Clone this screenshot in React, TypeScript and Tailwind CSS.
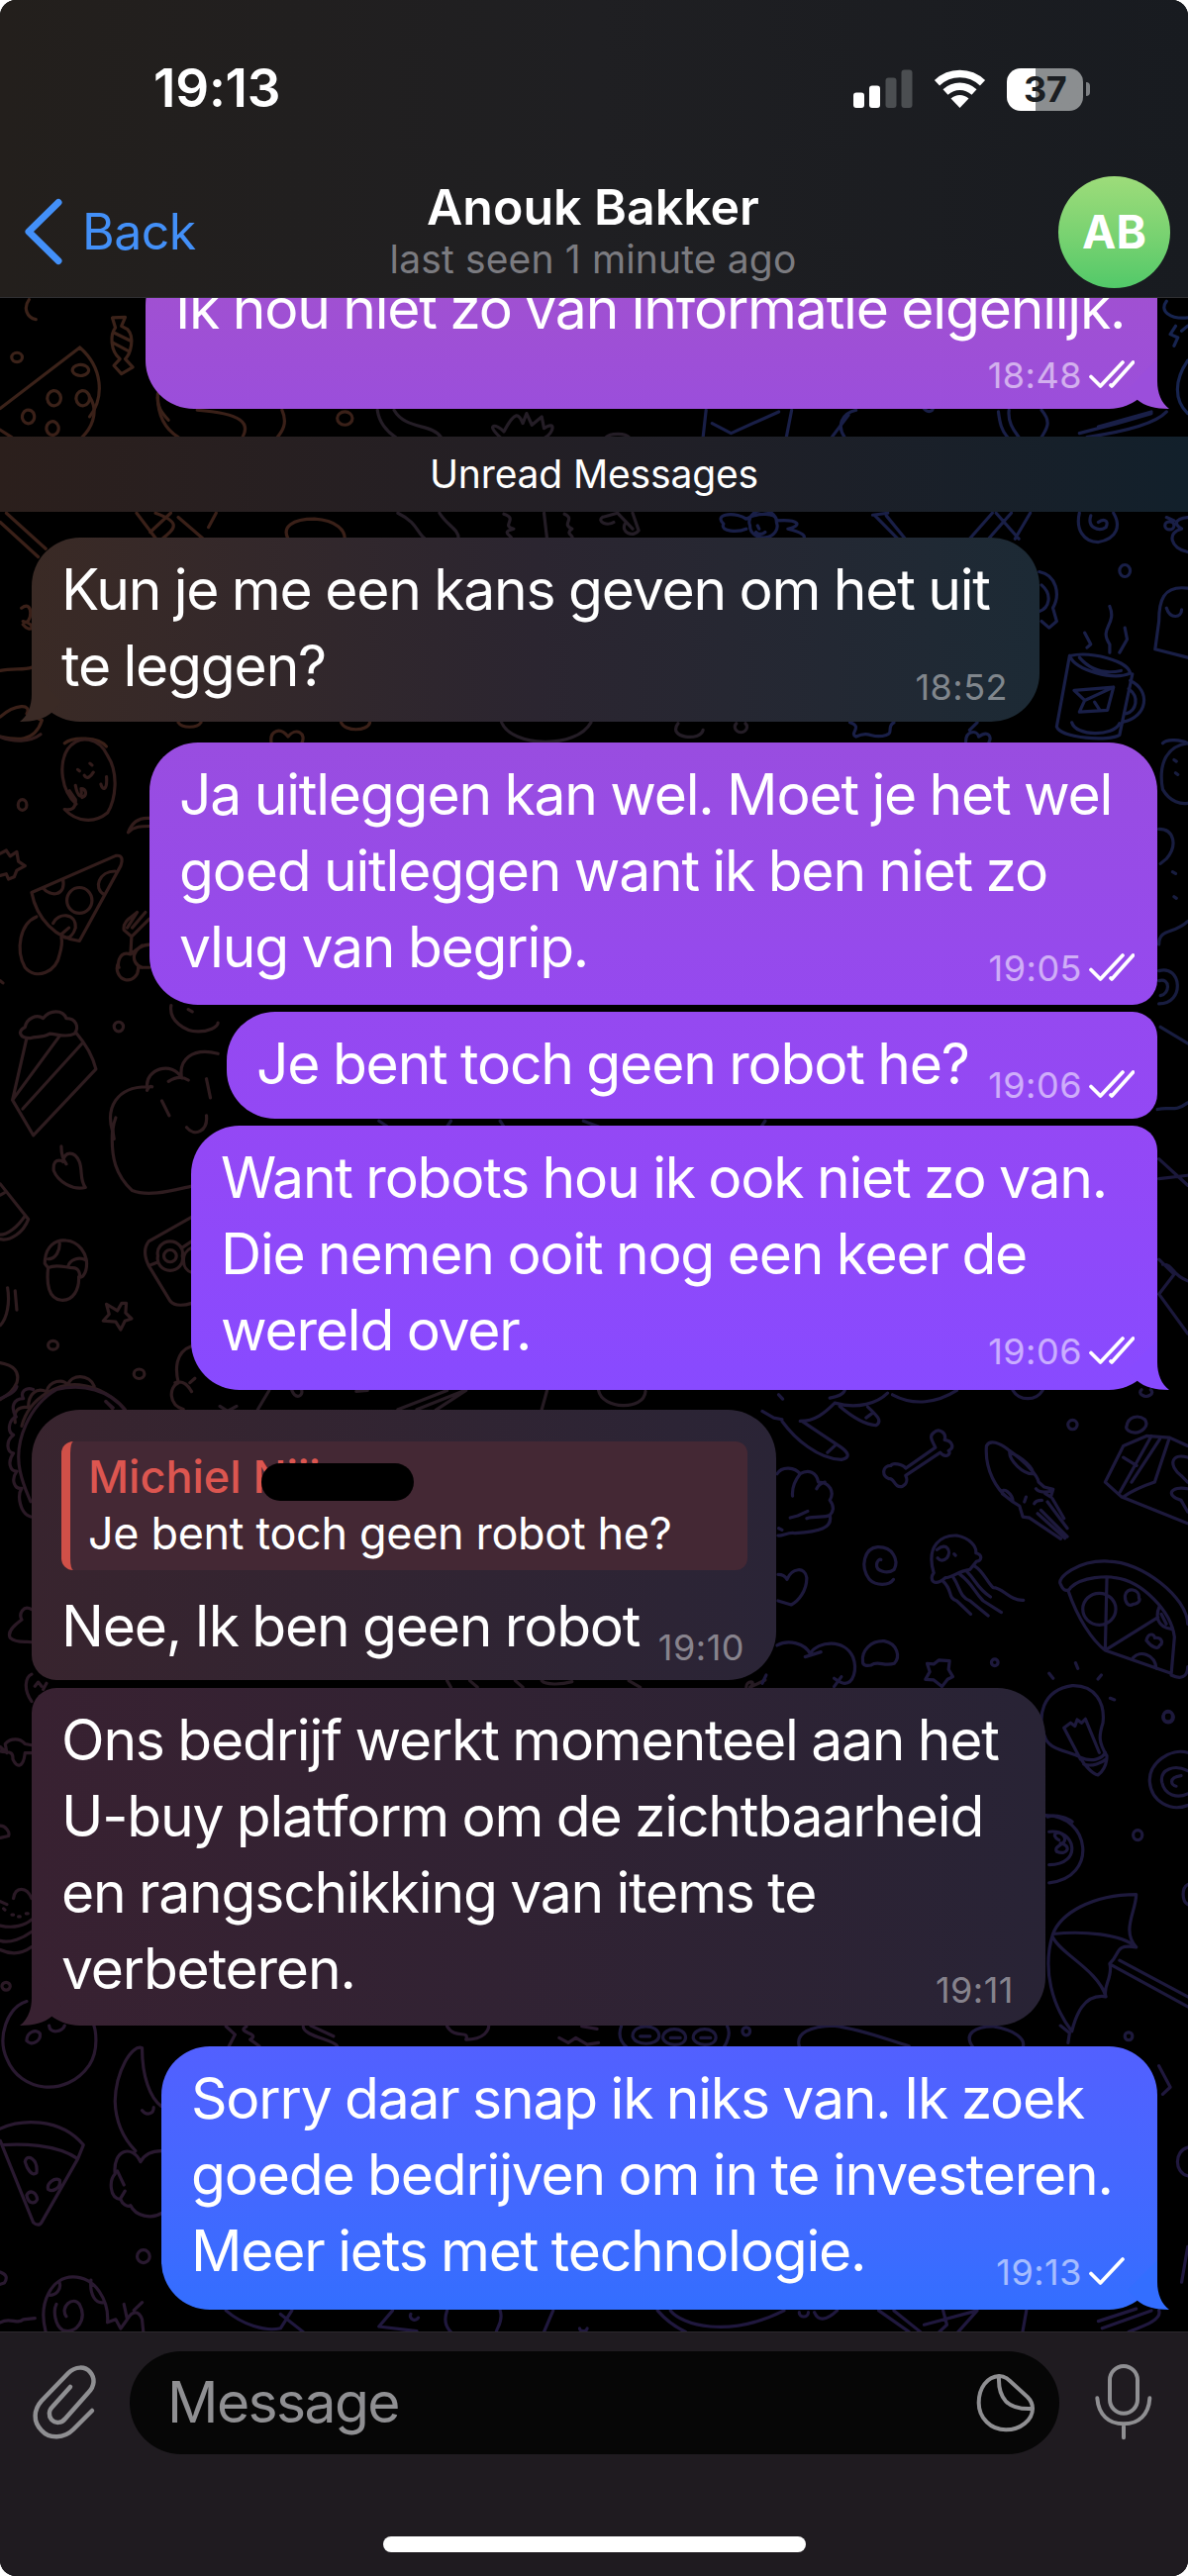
import React from 'react';
import clsx from 'clsx';

type Message = {
  id: number;
  lines: string[];
  time: string;
  outgoing?: boolean;
  status?: 'sent' | 'read';
  tail?: boolean;
  reply?: { author: string; text: string };
  className: string;
};

const messages: Message[] = [
  {
    id: 2,
    lines: ['Kun je me een kans geven om het uit', 'te leggen?'],
    time: '18:52',
    tail: true,
    className: 'mt-[26px] w-[1018px] h-[186px] rounded-[49px] bg-linear-to-r from-[#3a2a25] via-[#2b2530] to-[#1c2a35] text-[#3a2a25]',
  },
  {
    id: 3,
    lines: ['Ja uitleggen kan wel. Moet je het wel', 'goed uitleggen want ik ben niet zo', 'vlug van begrip.'],
    time: '19:05',
    outgoing: true,
    status: 'read',
    className: 'mt-[21px] w-[1018px] h-[265px] rounded-[49px] rounded-br-[25px] bg-linear-to-b from-[#994de0] to-[#9549ef]',
  },
  {
    id: 4,
    lines: ['Je bent toch geen robot he?'],
    time: '19:06',
    outgoing: true,
    status: 'read',
    className: 'mt-[7px] w-[940px] h-[108px] rounded-[49px] rounded-r-[25px] bg-linear-to-b from-[#9549f0] to-[#9348f5]',
  },
  {
    id: 5,
    lines: ['Want robots hou ik ook niet zo van.', 'Die nemen ooit nog een keer de', 'wereld over.'],
    time: '19:06',
    outgoing: true,
    status: 'read',
    tail: true,
    className: 'mt-[7px] w-[976px] h-[267px] rounded-[49px] rounded-tr-[25px] bg-linear-to-b from-[#9448f5] to-[#884aff] text-[#884aff]',
  },
  {
    id: 6,
    lines: ['Nee, Ik ben geen robot'],
    time: '19:10',
    reply: { author: 'Michiel Niii', text: 'Je bent toch geen robot he?' },
    className: 'mt-[20px] w-[752px] h-[273px] rounded-[49px] rounded-bl-[25px] bg-linear-to-r from-[#38242e] to-[#2a2436]',
  },
  {
    id: 7,
    lines: ['Ons bedrijf werkt momenteel aan het', 'U-buy platform om de zichtbaarheid', 'en rangschikking van items te', 'verbeteren.'],
    time: '19:11',
    tail: true,
    className: 'mt-[8px] w-[1024px] h-[341px] rounded-[49px] rounded-tl-[25px] bg-linear-to-r from-[#382131] to-[#282335] text-[#382131]',
  },
  {
    id: 8,
    lines: ['Sorry daar snap ik niks van. Ik zoek', 'goede bedrijven om in te investeren.', 'Meer iets met technologie.'],
    time: '19:13',
    outgoing: true,
    status: 'sent',
    tail: true,
    className: 'mt-[21px] w-[1006px] h-[266px] rounded-[49px] bg-linear-to-b from-[#5260ff] to-[#336eff] text-[#336eff]',
  },
];

// Every group has its own drawing space; strokes stay at the same width
const doodles: { transform: string; stroke: string; paths: string[] }[] = [
  {
    transform: 'scale(.7653 .3333)',
    stroke: '#4a2b20',
    paths: [
      'M38 905C30 930 35 960 47 965',
      'M148 960L165 958L160 985L168 995C178 1020 172 1070 165 1085L175 1110L160 1130L150 1105L158 1085C145 1060 145 1010 152 990Z M150 1005L172 1030M148 1035L170 1062',
      'M105 1050L0 1235M105 1050C135 1110 138 1200 118 1260M97 1110a9 14 0 1 0 18 18a9 14 0 1 0-18-18M64 1190a7 18 0 1 0 14 28a7 18 0 1 0-14-28M102 1190a7 18 0 1 0 14 28a7 18 0 1 0-14-28M15 1080a7 14 0 1 0 14 0a7 14 0 1 0-14 0',
      'M208 1190C206 1230 214 1250 222 1270',
    ],
  },
  {
    transform: 'scale(.7653 .3333)',
    stroke: '#1d2d63',
    paths: ['M1540 910C1530 940 1545 965 1568 960M1552 985L1545 1010L1555 1020L1550 1045M1560 1000L1568 985M1568 1090C1550 1150 1550 1210 1568 1250'],
  },
  {
    transform: 'translate(0 400) scale(.7653 .3333)',
    stroke: '#49291f',
    paths: [
      'M0 100L15 122M118 0C132 50 118 100 108 122M30 50a7 18 0 1 0 14 20a7 18 0 1 0-14-20M62 85a7 18 0 1 0 14 20a7 18 0 1 0-14-20',
      'M208 0C208 60 220 100 235 122M260 40C320 50 330 80 320 122M372 40C380 80 372 105 366 122M445 65a10 20 0 1 0 20 0a10 20 0 1 0-20 0',
      'M0 380L50 485M8 352L60 460M180 352L205 428M225 352L198 410M205 352C240 380 230 400 215 428M235 365L268 430M285 352L275 395',
      'M380 430C372 395 385 370 415 370C445 375 455 405 455 430M0 830C15 820 30 830 42 820M28 640C45 610 42 700 30 680C50 690 40 720 30 690',
      'M0 970C20 930 42 930 35 960L55 980C45 1050 20 1040 0 1030M85 1050C95 1030 130 1030 140 1060M358 1050C355 1010 370 1000 380 1030C390 1000 405 1020 398 1050M235 987C240 1005 260 1005 265 987M450 987C455 1015 485 1015 488 987',
    ],
  },
  {
    transform: 'translate(0 400) scale(.7653 .3333)',
    stroke: '#2e2530',
    paths: [
      'M498 40C500 75 510 105 522 122M520 40C535 100 570 80 582 122M660 122C640 80 655 80 665 105C680 40 685 50 690 80L695 50L702 85L715 60L718 95C735 70 730 110 720 122M800 122C805 110 825 108 830 122',
      'M525 352C550 380 550 410 560 428M580 352C590 390 605 400 605 428M665 355C685 370 660 390 678 400C660 410 675 420 675 428M718 352L722 430M745 355C760 370 740 385 755 400C745 415 758 420 755 428',
      'M795 365L815 352L835 400M795 365a8 10 0 1 0 15 15M825 385a8 16 0 1 0 18 20L835 352M662 987C675 1060 760 1070 780 987M895 990C880 1035 925 1045 928 1010M972 990a8 16 0 1 0 12 0',
    ],
  },
  {
    transform: 'translate(0 400) scale(.7653 .3333)',
    stroke: '#202759',
    paths: [
      'M932 40L928 122M940 80L965 110L1028 45M1045 40L1038 122M1120 55L1098 122M1130 40C1110 50 1105 90 1115 122M1218 30C1225 55 1235 40 1230 30M1318 45C1320 80 1322 100 1330 122M1332 40C1330 80 1340 105 1345 122M1375 40C1390 80 1380 100 1375 122M1425 110L1475 80L1520 50M1435 122C1500 100 1530 70 1540 45M1450 90L1520 45',
      'M955 385C940 350 975 350 985 370C1000 350 1025 350 1025 375C1055 370 1060 390 1040 400C1060 410 1065 425 1060 430M990 390a18 35 0 1 0 35-10a18 35 0 1 0-35 10M955 385C950 410 975 410 985 400M1000 390L1002 400M1010 410C1005 420 1000 415 998 410',
      'M1155 360L1185 430M1170 360L1195 430M1152 358L1172 352M1310 352L1280 430M1335 352L1305 430M1315 352L1345 430M1360 352L1340 430M1425 352C1420 400 1430 440 1450 440C1475 430 1480 390 1470 352M1440 360C1435 395 1450 410 1460 395C1465 370 1455 370 1450 380',
      'M1568 365C1550 370 1550 385 1560 400C1540 410 1545 460 1568 470M1538 390a6 12 0 1 0 12 0a6 12 0 1 0-12 0M1540 365L1550 375M1478 527a7 18 0 1 0 14 0a7 18 0 1 0-14 0',
      'M1372 530C1395 540 1400 600 1390 640L1395 680L1385 700L1375 680M1375 570C1390 600 1385 640 1372 650M1465 635C1475 690 1450 700 1465 750L1465 775M1432 715L1440 750L1435 760M1485 700L1488 735L1478 775M1568 580C1535 570 1530 620 1530 680L1525 765L1568 790M1540 640C1545 675 1560 670 1560 645',
      'M1412 785L1395 1000C1400 1035 1465 1045 1478 1025L1495 840M1412 785C1420 830 1470 860 1492 838C1490 800 1440 770 1412 785M1425 790C1440 830 1460 840 1480 830M1492 860C1520 890 1515 970 1483 985M1490 885C1505 910 1500 950 1487 960M1418 890L1470 880L1462 950L1425 955L1432 920ZM1432 920L1470 880M1445 925L1452 950',
      'M1122 987C1140 1000 1120 1020 1130 1030C1150 1010 1150 1040 1170 1025C1180 1020 1170 1000 1180 987M1275 1045C1275 1010 1290 1010 1292 1030C1305 1010 1310 1030 1305 1050M1290 987L1280 1010M1415 987C1420 1030 1470 1030 1478 990M1535 1050C1540 1035 1560 1040 1568 1050',
    ],
  },
  {
    transform: 'translate(0 740) scale(.3333 .4464)',
    stroke: '#3f2422',
    paths: [
      'M0 8C40 20 90 20 122 2M230 160C185 130 175 70 205 35C240 0 300 10 325 50C360 90 350 150 325 180C285 205 230 200 195 172C215 175 230 170 228 150L210 130M235 82L240 85M272 68L278 72M255 95C262 105 275 98 282 88M228 118C235 145 250 150 245 125C260 125 265 140 248 145M305 115C310 130 325 130 322 98',
      'M54 162a13 12 0 1 0 26 0a13 12 0 1 0-26 0M388 224C400 200 420 190 452 192M388 224C405 210 430 210 452 210M0 272L18 265L30 278L50 268L55 290L75 300L50 310L42 325L25 330L18 318L0 322',
      'M95 360L350 277C370 275 372 285 365 300L240 470C170 465 110 420 95 360ZM130 350C150 370 200 370 190 330M202 378a38 29 0 1 0 76 0a38 29 0 1 0-76 0M348 312C300 312 280 350 315 365M160 430C175 405 230 405 228 440C222 455 210 465 195 462M185 455L208 440M110 415C60 430 45 490 75 530C110 560 170 540 180 500C188 480 188 470 185 462',
      'M452 420L398 460L375 445C370 425 400 415 415 405L385 440M440 405L400 440M398 460L395 500L430 480M358 520a32 26 0 1 0 60 10L452 530M395 500C355 490 355 530 360 530M452 478C400 480 390 520 430 530M0 560L8 565',
    ],
  },
  {
    transform: 'translate(0 740) scale(.3333 .4464)',
    stroke: '#3a2327',
    paths: [
      'M90 690C60 690 50 675 75 665C80 645 110 635 130 645C150 625 190 625 200 645C230 645 240 665 225 680C200 690 170 680 150 680C130 690 110 685 90 690ZM80 690L37 830L100 910L290 760C280 730 255 700 230 678M37 830L180 685M68 850L248 702M345 664a13 10 0 1 0 28 0a13 10 0 1 0-28 0',
      'M518 616C510 650 560 675 600 675C630 675 660 665 660 655M570 625L582 630M580 1025C520 1035 450 1050 400 1035C350 1000 335 960 340 900C320 850 350 800 445 800C440 760 520 740 550 780C540 740 580 710 660 725M445 808C450 800 455 798 460 800M510 788C530 778 550 775 570 785M350 870C340 890 340 900 345 918M490 832L512 865M625 782L637 825M565 892C590 915 630 900 625 865',
      'M195 970C165 960 160 975 162 990C175 1015 220 1035 258 1028C240 1010 250 990 240 970C225 945 195 945 190 970M185 935C185 955 190 965 200 975M0 1020L85 1100C70 1130 30 1150 0 1145M75 1092C50 1120 20 1135 0 1135M0 1045L12 1040',
      'M135 1200C135 1160 170 1145 200 1148C240 1150 262 1180 262 1200C262 1225 245 1235 238 1230C240 1260 220 1285 185 1283C145 1280 140 1245 145 1210ZM145 1210C170 1200 200 1210 220 1210C240 1210 242 1225 240 1232M145 1190C170 1190 180 1170 180 1155M205 1208C210 1190 240 1185 258 1192M22 1255C30 1290 20 1325 0 1340M45 1262L50 1305',
      'M355 1307L368 1290L382 1290L380 1312L398 1325L378 1330L365 1350L350 1332L312 1330L330 1315L322 1292ZM145 1385a15 10 0 1 0 30 0a15 10 0 1 0-30 0M405 1450a15 10 0 1 0 32 0a15 10 0 1 0-32 0M0 1425C40 1430 60 1445 50 1470C35 1495 15 1500 0 1508',
      'M580 1095L450 1150C430 1170 440 1190 450 1205L515 1285C530 1298 560 1295 580 1290M478 1183a38 27 0 1 0 74 0a38 27 0 1 0-74 0M496 1183a18 13 0 1 0 38 0a18 13 0 1 0-38 0M450 1205L475 1198M550 1165L580 1150M580 1165C545 1175 550 1215 580 1220M580 1387C530 1400 530 1440 540 1470C510 1480 510 1520 555 1530M530 1470C550 1465 565 1470 580 1490M575 1470L590 1460',
      'M65 1568C90 1500 180 1470 240 1475C300 1480 350 1505 378 1530M45 1560C40 1535 50 1525 85 1525C85 1495 110 1480 140 1490C150 1465 190 1460 205 1475C215 1450 270 1450 285 1478M320 1512L340 1528',
    ],
  },
  {
    transform: 'translate(0 740) scale(.7653 .3333)',
    stroke: '#1f2550',
    paths: ['M1568 30C1535 40 1530 110 1535 170C1545 210 1560 215 1568 212M1550 80L1553 85M1552 120L1555 125M1530 290C1550 290 1555 340 1540 380L1532 395M1548 420L1552 425M1550 495L1553 500M1568 570C1550 610 1530 590 1530 640M1530 720C1560 700 1565 820 1530 820M1530 750C1545 740 1545 790 1532 795M1532 890L1568 940M1528 1140C1545 1130 1550 1150 1568 1120'],
  },
  {
    transform: 'translate(0 1120) scale(.7653 .3333)',
    stroke: '#221f4a',
    paths: ['M1530 150L1568 230M1530 210L1568 200M1530 455L1550 500L1530 560L1568 680M1535 470C1550 470 1545 500 1568 520M500 35L510 50M595 35L590 52M660 35L665 52M770 35L790 52M1010 35L1005 52'],
  },
  {
    transform: 'translate(0 1400) scale(.7653 .3333)',
    stroke: '#30222c',
    paths: ['M355 12L340 70M290 60L300 75L312 60M385 12C390 40 400 30 398 12M525 70L590 12M550 70L610 15M575 72L615 12M722 12L715 70M790 12C795 70 850 75 852 15M470 15L485 12M590 892L595 912M620 892L630 912M680 892L690 912M715 892C720 905 740 905 755 895M830 892L845 912M985 912C985 890 1000 890 990 912L1010 890'],
  },
  {
    transform: 'translate(770 1400) scale(.3333)',
    stroke: '#25204c',
    paths: [
      'M0 75L35 95L60 100M115 105C160 105 190 80 220 50M220 50C290 70 350 50 380 20M395 25C460 60 530 50 590 12M205 35C230 30 245 25 250 12M50 25L62 38M60 105C100 160 170 220 240 222C270 215 260 200 240 185L120 105M198 200L220 180M235 60C270 90 310 115 345 118C365 105 350 90 320 62M315 95L335 80M760 12C780 45 830 45 850 12',
      'M1150 10a18 12 0 1 0 28 0M927 116a14 14 0 1 0 28 0a14 14 0 1 0-28 0M525 185L435 248C425 235 395 230 390 240C365 240 360 270 385 280C400 275 400 310 425 303C440 295 440 280 435 270L540 200C555 220 575 205 565 195C585 185 575 165 553 162C560 140 535 125 520 140C505 150 515 165 525 185Z',
      'M45 265C60 240 100 245 115 265C140 250 165 260 170 290C205 290 220 320 205 345C220 365 215 380 205 390C215 430 170 440 100 445C80 440 60 455 48 452M115 265C95 290 90 310 92 332M165 310C172 295 180 292 190 290M135 400C160 390 190 400 205 390M85 398L108 392L138 378M50 430L60 435',
      'M680 180C690 160 720 170 750 195C800 230 835 270 838 290L855 305L882 312L875 335L858 325M680 180C675 240 700 320 780 362L790 395L810 398M750 200C750 225 790 265 820 265C825 250 790 215 750 200M728 325C725 300 760 325 760 350ZM795 350L800 335M825 355C830 345 840 345 848 345M830 310C840 325 870 320 880 315M865 350L925 430M880 340L915 400M835 385L918 460M845 375L925 455M810 398L905 462',
      'M398 585C385 605 345 605 325 585C295 545 310 490 350 487C395 485 415 525 400 555C380 570 345 560 347 540C348 530 355 522 360 525M48 570C60 570 70 575 75 585C90 550 130 545 135 580C135 620 110 650 88 662L48 650',
      'M520 565C495 480 545 450 590 452C630 460 650 485 648 505C670 510 665 530 650 530L630 555C590 560 580 580 555 580C520 610 505 585 520 565M530 495C560 470 575 500 560 520C550 530 540 530 532 520M582 508L586 512M548 590C580 620 560 640 590 650L632 690M580 580C600 610 600 640 630 650L685 695M600 570C640 600 640 620 670 650L725 685M620 560C650 590 650 610 692 638M645 545C670 560 680 590 700 610C730 610 750 650 792 648',
      'M905 600C890 580 960 525 1050 530C1150 530 1290 640 1290 720M905 600C915 625 930 620 935 610C970 575 1050 575 1070 580C1150 590 1240 680 1250 760L1240 875C1270 890 1290 880 1290 850M928 620C955 700 1000 770 1040 800L1240 870M1045 580L1040 800L1200 700M972 675a50 48 0 1 0 100 0a50 48 0 1 0-100 0M1100 635C1105 605 1145 615 1142 640C1150 655 1130 660 1125 660C1110 670 1100 655 1100 635M1165 770C1170 745 1190 750 1190 762C1215 760 1215 780 1205 785C1200 800 1180 790 1165 770M1125 822C1145 800 1190 810 1195 855M1205 665C1190 700 1200 730 1240 735M1210 690L1225 720',
      'M45 785C80 765 130 780 145 810C170 770 250 765 275 820C290 860 275 900 250 900C240 900 225 890 218 885M130 820L178 805M218 910L240 880M0 900L12 875M305 835C300 800 330 770 370 772C410 780 420 820 400 840C370 850 350 830 330 845C315 848 305 845 305 835M500 840L520 842L535 830L568 832L565 858L578 880L562 888L545 910L520 890L495 888L508 865ZM695 837a10 10 0 1 0 20 0a10 10 0 1 0-20 0',
      'M870 870L882 885M950 838L957 855M1028 875L1018 887M1055 945L1068 950M860 1070C830 1000 850 920 940 907C1010 905 1040 960 1033 1020C1020 1060 1020 1080 1045 1120C1045 1150 1030 1170 1018 1178C1000 1175 970 1140 965 1125C930 1105 880 1105 860 1070M965 1125C1000 1140 1030 1130 1040 1110M975 1145C1000 1155 1030 1140 1042 1130M965 1130L915 1035L935 1020L948 1030L955 1010L968 1020L980 1008L1022 1110M1215 1003a16 16 0 1 0 32 0a16 16 0 1 0-32 0',
      'M1105 120C1110 90 1140 85 1160 100C1175 120 1150 140 1130 140C1115 140 1100 130 1105 120M1290 180L1235 155L1165 150L1095 180L1040 290L1090 335L1290 415M1235 155L1190 290C1160 300 1130 310 1095 335M1180 150L1085 320M1205 160L1120 290M1095 215L1135 240M1290 215C1240 200 1230 240 1270 270L1290 290M1290 310C1240 300 1220 330 1270 345L1290 380',
      'M1290 1110C1240 1095 1170 1140 1175 1200C1180 1260 1240 1290 1290 1270M1290 1165C1250 1145 1205 1160 1212 1200C1220 1240 1260 1250 1290 1235M1270 1180C1230 1185 1240 1210 1255 1212M865 1305C890 1295 930 1310 940 1320',
    ],
  },
  {
    transform: 'translate(0 1690) scale(.7653 .3333)',
    stroke: '#25204c',
    paths: [
      'M1380 430C1440 430 1450 620 1385 635M1385 480C1420 470 1430 580 1385 580M1398 505C1385 490 1398 470 1405 495C1410 520 1390 520 1395 540C1410 555 1415 520 1400 515M1496 490a6 15 0 1 0 12 0a6 15 0 1 0-12 0M1568 640C1560 650 1560 690 1568 700M1536 130a6 16 0 1 0 12 0a6 16 0 1 0-12 0',
      'M1390 790C1400 730 1440 670 1500 670C1500 720 1480 780 1500 830C1470 820 1480 850 1465 880C1470 920 1455 950 1460 980C1430 970 1420 1040 1415 1085C1390 1010 1375 900 1390 790ZM1390 790C1430 780 1480 790 1500 830M1390 800C1400 850 1450 900 1460 980M1468 885L1568 1010M1478 870L1568 980',
      'M820 1070C815 1100 820 1120 828 1135M835 1100C835 1060 870 1060 870 1100C868 1130 838 1130 835 1100M875 1105C875 1070 905 1070 905 1105C903 1135 877 1130 875 1105M915 1105C915 1070 945 1070 945 1105C943 1135 917 1130 915 1105M845 1100L858 1100M885 1105L898 1105M925 1105L938 1105M960 1070C965 1090 960 1120 955 1135M980 1085a5 12 0 1 0 10 0a5 12 0 1 0-10 0M1055 1130C1050 1090 1070 1070 1100 1068C1140 1080 1170 1110 1200 1130M1285 1135C1270 1090 1290 1070 1310 1070C1340 1080 1355 1110 1350 1135M1400 1068L1412 1090L1410 1120M1485 1100a5 12 0 1 0 10 0a5 12 0 1 0-10 0',
    ],
  },
  {
    transform: 'translate(0 1690) scale(.7653 .3333)',
    stroke: '#32203a',
    paths: ['M298 1070L310 1095L302 1130M325 1070C310 1090 345 1090 330 1110L342 1130M400 1070C400 1100 440 1110 445 1130M410 1068L440 1100M590 1070C600 1110 620 1080 615 1110C640 1110 645 1080 645 1068M738 1105L750 1120L760 1105L775 1125L790 1120M768 1070L788 1078'],
  },
  {
    transform: 'translate(0 1400) scale(.3333 .6122)',
    stroke: '#35202f',
    paths: [
      'M380 40C330 5 250 -5 170 5C90 30 40 90 60 140C70 165 85 180 92 190M100 5C75 0 60 10 70 20C40 20 30 35 48 50C25 55 20 75 40 80C15 90 20 110 40 110C20 125 30 140 50 140C30 155 45 170 65 168C50 180 60 210 92 215M320 25L342 35M0 20C20 15 45 10 50 0',
      'M95 368C70 360 55 375 65 385C40 395 20 405 30 415C50 425 80 420 95 422M95 475C75 480 70 500 95 520M105 495L115 488L125 495M130 500L140 490M0 595L20 605L15 590C30 580 60 580 75 590L95 592M0 602C20 605 40 600 38 615C50 630 70 630 75 605L95 605M0 725C15 725 30 735 25 742L0 745M0 850L20 855M0 890C40 895 75 890 95 880M0 915C30 920 70 910 95 900M0 930C40 940 70 935 95 925M40 845C45 825 80 825 95 845M10 862L14 864M35 872L40 872M55 875L60 875M78 870L84 870M5 990a12 6 0 1 0 25 0a12 6 0 1 0-25 0',
    ],
  },
  {
    transform: 'translate(0 1400) scale(.3333 .6122)',
    stroke: '#34203c',
    paths: [
      'M80 1015C20 1025 -10 1075 20 1110C60 1165 200 1175 270 1120C300 1095 290 1060 280 1050M80 1080C80 1065 110 1060 120 1068C125 1080 95 1090 80 1080M148 1055C150 1070 190 1065 195 1055',
      'M0 1225C60 1210 180 1205 252 1252L235 1275C170 1250 60 1250 5 1252L100 1380C110 1385 120 1385 125 1380L235 1275M5 1252L0 1245M75 1280C80 1265 115 1275 110 1298C95 1305 80 1290 75 1280M145 1325C140 1315 165 1305 180 1310C185 1325 155 1330 145 1325M80 1335C90 1325 110 1330 112 1342C105 1350 85 1350 80 1335',
      'M430 1092C400 1085 350 1130 348 1180C350 1220 380 1245 410 1262M430 1092C430 1140 455 1175 488 1188M430 1195C445 1205 465 1200 465 1190M488 1262C470 1262 440 1265 425 1280C400 1250 340 1260 348 1300C330 1310 330 1340 365 1342C370 1350 385 1355 395 1352C410 1370 460 1375 488 1365M355 1295L375 1318M365 1340L378 1328M415 1436a18 10 0 1 0 38 0a18 10 0 1 0-38 0M0 1462C15 1465 25 1470 12 1480L0 1482',
      'M140 1565C110 1510 160 1470 220 1470C290 1470 330 1510 325 1545L350 1540L365 1555L385 1540L375 1515M385 1540C400 1525 420 1525 430 1540L435 1568M405 1525L430 1512M150 1500C170 1500 185 1490 180 1480M275 1475C270 1500 290 1515 315 1512M200 1535C180 1520 220 1500 240 1515C265 1540 230 1565 190 1558C165 1550 160 1525 170 1515M0 1545C30 1535 50 1550 70 1540L105 1538',
    ],
  },
  {
    transform: 'translate(0 2040) scale(.7653 .3584)',
    stroke: '#281f4e',
    paths: ['M298 820C320 860 350 880 370 870L385 820M370 830L400 880M518 820L500 865L550 878M542 830a5 10 0 1 0 10 10M590 820C585 850 590 870 595 880M660 820C665 850 655 870 655 880M730 820L718 880M765 870a5 8 0 1 0 10 0M868 820C880 850 895 870 905 880M885 820C900 860 960 900 1035 820M1055 825a6 12 0 1 0 12 0M1105 820C1090 850 1080 850 1075 825M1160 820L1200 880M1180 820L1215 880M1245 820L1250 860L1240 880M1220 860L1290 820L1265 880M1355 820L1350 880M1450 850L1500 815M1455 870L1520 820M1530 820C1535 850 1500 870 1490 880M1530 130L1545 190L1535 210M1568 360C1550 370 1550 430 1568 440M1568 640L1560 740'],
  },
];

const Wallpaper = () => (
  <svg className="absolute inset-0 h-full w-full opacity-80" viewBox="0 300 1200 2055" fill="none" strokeWidth="3.2" strokeLinecap="round" strokeLinejoin="round">
    {doodles.map((group, i) => (
      <g key={i} transform={group.transform} stroke={group.stroke}>
        {group.paths.map((d) => (
          <path key={d} d={d} vectorEffect="non-scaling-stroke" />
        ))}
      </g>
    ))}
  </svg>
);

const Ticks = ({ status }: { status: 'sent' | 'read' }) => (
  <svg
    className={clsx('ml-[7px] h-[28px]', status === 'read' ? 'w-[46px]' : 'w-[37px]')}
    viewBox={status === 'read' ? '0 0 46 28' : '0 0 37 28'}
    fill="none"
    stroke="white"
    strokeWidth="3.7"
    strokeLinecap="round"
    strokeLinejoin="round"
  >
    <path d="M2 16.5L11.5 26L34 2" />
    {status === 'read' && <path d="M22 25L23 26L44.500 2" />}
  </svg>
);

const Meta = ({ time, status }: { time: string; status?: 'sent' | 'read' }) => (
  <span className="flex translate-y-[14px] items-baseline text-[36px] tracking-[0.5px] [word-spacing:0]">
    <span className={status ? 'text-white/55' : 'text-white/45'}>{time}</span>
    {status && <Ticks status={status} />}
  </span>
);

const Tail = ({ outgoing }: { outgoing?: boolean }) => (
  <svg
    className={clsx('absolute bottom-0 h-[50px] w-[42px]', outgoing ? '-right-3' : '-left-3 -scale-x-100')}
    viewBox="0 0 42 50"
    fill="currentColor"
  >
    <path d="M30 0V22C30 34 34 44 42 50C28 50 17 47 10 41L0 30Z" />
  </svg>
);

const Bubble = ({ message }: { message: Message }) => {
  const { lines, time, status, outgoing, tail, reply, className } = message;
  return (
    <div className={clsx('relative flex shrink-0 flex-col pt-[13.5px] pl-[30px]', outgoing ? 'self-end' : 'self-start', status === 'read' ? 'pr-[23px]' : 'pr-8', className)}>
      {tail && <Tail outgoing={outgoing} />}
      {reply && (
        <div className="relative mt-[18px] mb-[18px] -mr-[3px] h-[130px] overflow-hidden rounded-[12px] border-l-[9px] border-[#d05048] bg-[#442834] pt-[7px] pl-[18px] whitespace-nowrap">
          <p className="text-[45px] leading-[57px] font-medium text-[#dc5650]">{reply.author}</p>
          <p className="text-[45px] leading-[57px] tracking-[-0.35px] text-white">{reply.text}</p>
          <span className="absolute top-[22px] left-[193px] h-[38px] w-[154px] rounded-full bg-black" />
        </div>
      )}
      {lines.map((line, i) => (
        <div
          key={line}
          className={clsx(
            'relative flex shrink-0 items-baseline justify-between text-[57px] tracking-[-1.2px] whitespace-nowrap text-white [word-spacing:-1.3px]',
            line ? 'h-[77.3px] leading-[77px]' : 'h-[54px] leading-[31px]'
          )}
        >
          <span>{line}</span>
          {i === lines.length - 1 && <Meta time={time} status={status} />}
        </div>
      ))}
    </div>
  );
};

const StatusIcons = () => (
  <div className="flex items-center">
    <svg className="h-[40px] w-[62px]" viewBox="0 0 62 40" fill="white">
      <rect x="1" y="23.5" width="11" height="15.5" rx="3" />
      <rect x="17" y="16.5" width="11" height="22.5" rx="3" />
      <rect x="33.5" y="8.5" width="11" height="30.5" rx="3" fill="#4b4e51" />
      <rect x="49.5" y="0.5" width="11" height="38.5" rx="3" fill="#4b4e51" />
    </svg>
    <svg className="ml-[20px] h-[40px] w-[53px]" viewBox="0 0 53 40" fill="none" stroke="white" strokeWidth="7.5">
      <path d="M3.5 13.8C16.5 1.5 36.5 1.5 49.5 13.8" />
      <path d="M12 23C20.5 15.3 32.5 15.3 41 23" />
      <path d="M17.5 29.5C22.5 24.8 30.5 24.8 35.5 29.5L26.5 39Z" fill="white" stroke="none" />
    </svg>
    <div className="ml-[21px] flex h-[43px] w-[77px] items-center justify-center rounded-[14px] bg-linear-to-r from-white from-38% to-[#8b8e90] to-38% text-[36px] font-bold tracking-[-0.7px] text-[#1b1e22]">
      37
    </div>
    <div className="ml-[3px] h-[14px] w-[4px] rounded-r-full bg-[#7d8083]" />
  </div>
);

const Header = () => (
  <header className="h-[301px] shrink-0 border-b border-[#303033] bg-linear-to-r from-[#231f1c] via-[#1f1f22] to-[#181b20]">
    <div className="flex h-[177px] items-center justify-between pt-[3px] pr-[99px] pl-[155px]">
      <span className="text-[53px] font-semibold tracking-[-0.2px] text-white">19:13</span>
      <StatusIcons />
    </div>
    <div className="grid h-[114px] grid-cols-[1fr_auto_1fr] items-center px-[18px]">
      <div className="flex items-center gap-[19px] pl-[6px] text-[#4390f8]">
        <svg className="h-[68px] w-[40px]" viewBox="0 0 40 68" fill="none" stroke="currentColor" strokeWidth="7" strokeLinecap="round" strokeLinejoin="round">
          <path d="M35 4.5L5 34L35 63.5" />
        </svg>
        <span className="text-[50px] tracking-[-0.5px]">Back</span>
      </div>
      <div className="-translate-x-px pt-[2px] text-center whitespace-nowrap">
        <h1 className="text-[50px] leading-[54px] font-semibold text-white">Anouk Bakker</h1>
        <p className="text-[39px] leading-[52px] tracking-[0.15px] text-[#7b7b80]">last seen 1 minute ago</p>
      </div>
      <div className="flex size-[113px] items-center justify-center justify-self-end rounded-full bg-linear-to-b from-[#9ddc7a] to-[#51c969] text-[46px] font-bold text-white">
        AB
      </div>
    </div>
  </header>
);

const InputBar = () => (
  <footer className="flex h-[247px] shrink-0 flex-col border-t border-[#2c292e] bg-[#1f1b20]">
    <div className="flex items-center pt-[19px] pr-[35px] pl-[31px] text-[#8f8f92]">
      <svg className="h-[78px] w-[68px]" viewBox="32 2388 68 78" fill="none" stroke="currentColor" strokeWidth="4.5" strokeLinecap="round" strokeLinejoin="round">
        <path d="M94 2435L75 2454C66 2463 51 2464 43 2455C34 2446 35 2434 43 2425L70 2397C77 2390 87 2390 92 2396C97 2402 97 2410 90 2417L67 2443C63 2448 57 2448 53 2444C50 2440 50 2435 54 2431L72 2411" />
      </svg>
      <div className="ml-[32px] flex h-[104px] w-[939px] items-center justify-between rounded-full bg-[#060606] pr-[22px] pl-[38px]">
        <span className="text-[57px] tracking-[-1.6px]">Message</span>
        <svg className="size-[64px]" viewBox="254 162 192 192" fill="none" stroke="currentColor" strokeWidth="12" strokeLinecap="round" strokeLinejoin="round">
          <path d="M330 177C293 179 268 213 268 258C268 305 305 340 350 340C395 340 431 310 431 275C431 262 425 250 415 240L360 190C352 182 342 177 330 177Z" />
          <path d="M329 178C326 245 355 280 430 276" />
        </svg>
      </div>
      <svg className="ml-auto h-[80px] w-[60px]" viewBox="616 144 180 240" fill="none" stroke="currentColor" strokeWidth="12" strokeLinecap="round">
        <rect x="664" y="153" width="84" height="143" rx="42" />
        <path d="M626 250C630 300 660 328 706 328C752 328 782 300 785 250M706 328V370" />
      </svg>
    </div>
    <div className="mt-auto mb-[24px] h-[16px] w-[427px] self-center rounded-full bg-white" />
  </footer>
);

const App: React.FC = () => {
  return (
    <div className="w-[1200px] bg-white font-[Inter,'Liberation_Sans',sans-serif]">
      <div className="flex h-[2602px] flex-col overflow-hidden rounded-[16px] bg-black">
        <Header />
        <main className="relative flex min-h-0 flex-1 flex-col overflow-hidden">
          <Wallpaper />
          <div className="relative flex flex-col pr-[31px] pl-8">
            {/* scrolled half under the header */}
            <Bubble
              message={{
                id: 1,
                lines: ['Ik hou niet zo van informatie eigenlijk.', ''],
                time: '18:48',
                outgoing: true,
                status: 'read',
                tail: true,
                className: '-mt-[42px] w-[1022px] h-[154px] rounded-[49px] rounded-tr-[25px] bg-linear-to-b from-[#a251cf] to-[#9b4edb] text-[#9b4edb]',
              }}
            />
            <div className="mt-[28px] -mr-[31px] -ml-8 flex h-[76px] items-center justify-center bg-linear-to-r from-[#2b1f1c] via-[#221f26] to-[#12202b] text-[39px] tracking-[-0.15px] text-white">
              Unread Messages
            </div>
            {messages.map((message) => (
              <Bubble key={message.id} message={message} />
            ))}
          </div>
        </main>
        <InputBar />
      </div>
    </div>
  );
};

export default App;
